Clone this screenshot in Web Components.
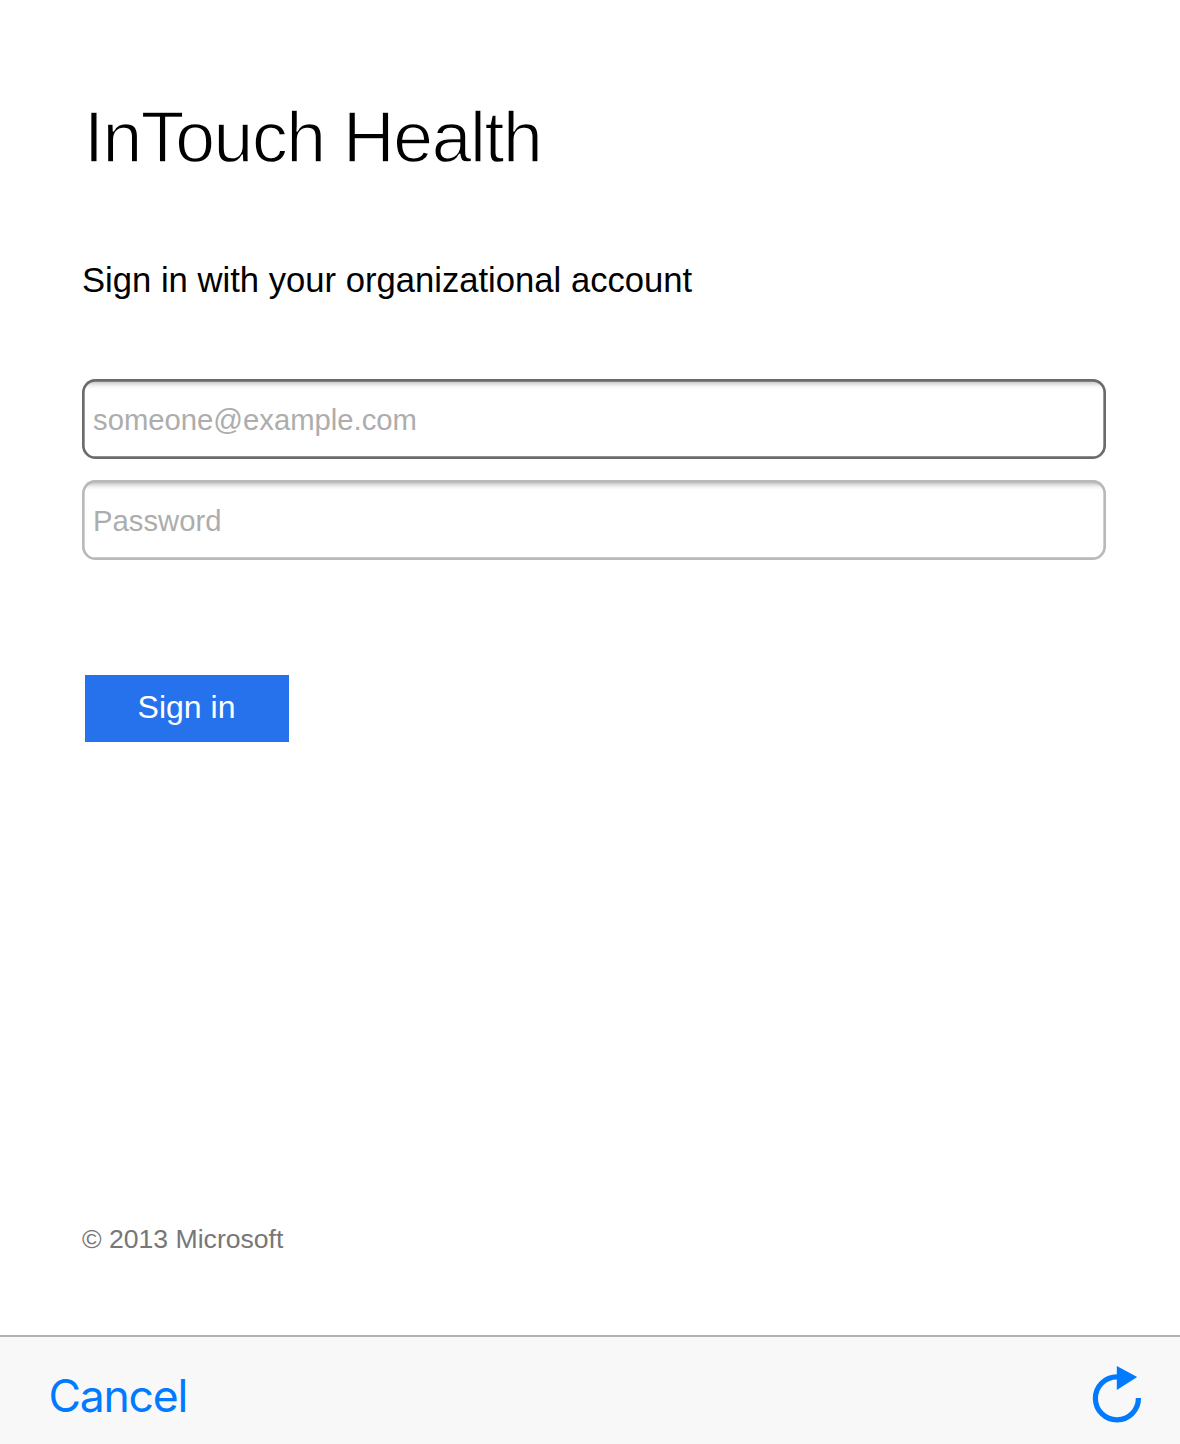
<!DOCTYPE html>
<html lang="en">
<head>
<meta charset="utf-8">
<title>Sign In</title>
<style>
html,body{margin:0;height:100%;background:#fff}
body{font-family:"Liberation Sans",Arial,sans-serif;color:#000}
</style>
</head>
<body>
<sign-in-page></sign-in-page>
<script>
function define(name, html) {
  const template = document.createElement('template');
  template.innerHTML = html;
  customElements.define(name, class extends HTMLElement {
    constructor() {
      super();
      this.attachShadow({ mode: 'open' }).append(template.content.cloneNode(true));
    }
  });
}

define('page-title', `<style>
:host{display:block}
h1{margin:0;padding-left:2px;font-size:71.5px;line-height:82px;font-weight:400;letter-spacing:-1.4px;white-space:nowrap;-webkit-text-stroke:1.4px #fff}
</style><h1><slot></slot></h1>`);

define('text-field', `<style>
:host{display:flex;align-items:center;box-sizing:border-box;height:80px;padding:2px 11px 0;border-radius:13.5px;
  font-size:29.25px;line-height:34px;color:#adadad;
  background:linear-gradient(#c2c2c2 2px,#d6d6d6 4px,#f3f3f3 7px,#fff 10px);
  box-shadow:inset 0 0 0 2.67px var(--edge,#b9b9b9)}
:host([active]){--edge:#6b6b6b}
</style><span><slot></slot></span>`);

define('submit-button', `<style>
:host{display:block}
button{display:block;width:204px;height:66.5px;margin:0;padding:0 0 2px;border:0;border-radius:0;background:#2672ec;color:#fff;font:32px/36px "Liberation Sans",Arial,sans-serif}
</style><button type="button"><slot></slot></button>`);

define('reload-icon', `<style>
:host{display:block;width:50px;height:60px}
svg{display:block}
</style><svg width="50" height="60" viewBox="0 0 50 60" role="presentation">
<path d="M25 11.9A21.5 21.5 0 1 0 46.4 33" fill="none" stroke="#007aff" stroke-width="5.2"/>
<path d="M24.8 1L45.2 12L24.8 25Z" fill="#007aff"/>
</svg>`);

define('bottom-toolbar', `<style>
:host{display:flex;justify-content:space-between;align-items:flex-start;box-sizing:border-box;height:109px;padding:28px 38px 0 48.5px;border-top:2px solid #b2b2b2;background:#f8f8f8}
span{font:400 44.5px/62px Inter,sans-serif;letter-spacing:-1.25px;color:#007aff}
</style><span><slot></slot></span><reload-icon></reload-icon>`);

define('sign-in-page', `<style>
:host{display:flex;flex-direction:column;height:1444px;background:#fff}
main{flex:1;display:flex;flex-direction:column;padding:96px 74px 0 82px}
.lead{margin:82px 0 0;font-size:34.64px;line-height:40px}
.fields{display:flex;flex-direction:column;gap:21px;margin-top:79px}
submit-button{margin:115px 0 0 2.5px}
footer{margin-top:auto;padding-bottom:81px;font-size:26.6px;line-height:30px;color:#777}
</style>
<main>
<page-title>InTouch Health</page-title>
<p class="lead">Sign in with your organizational account</p>
<div class="fields"><text-field active>someone@example.com</text-field><text-field>Password</text-field></div>
<submit-button>Sign in</submit-button>
<footer>© 2013 Microsoft</footer>
</main>
<bottom-toolbar>Cancel</bottom-toolbar>`);
</script>
</body>
</html>
